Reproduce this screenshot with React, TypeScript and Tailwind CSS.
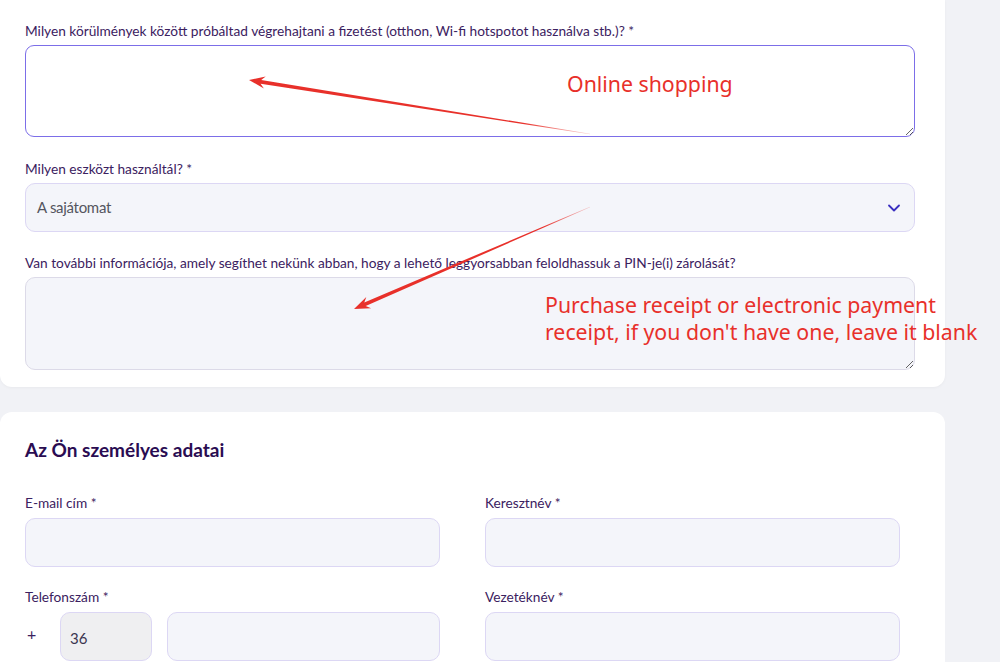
import { ChevronDown } from 'lucide-react'

const label = 'block text-[13.7px] leading-[18px] text-[#3b2160] mb-[5px]'
const field = 'block w-full h-[49px] rounded-[10px] border border-[#dcd7f4] bg-[#f4f5fa]'

export default function App() {
  return (
    <div className="relative min-h-[662px] w-[1000px] overflow-hidden bg-[#f1f2f6] font-['Lato',sans-serif]">
      <div className="w-[945px] rounded-b-[12px] bg-white pl-[25px] pr-[30px] pt-[22px] pb-[17px] shadow-[0_1px_3px_rgba(0,0,0,0.04)]">
        <label className={label}>
          Milyen körülmények között próbáltad végrehajtani a fizetést (otthon, Wi-fi hotspotot használva stb.)? *
        </label>
        <textarea className="block h-[92px] w-full rounded-[9px] border-[1.5px] border-[#7c6ee8] bg-white outline-none" />

        <label className={label + ' mt-[23px]'}>Milyen eszközt használtál? *</label>
        <div className={field + ' flex items-center justify-between pl-[11px] pr-[10px]'}>
          <span className="text-[15px] tracking-[-0.3px] text-[#555560]">A sajátomat</span>
          <ChevronDown size={20} strokeWidth={2.2} className="text-[#3a2fc0]" />
        </div>

        <label className={label + ' mt-[22px]'}>
          Van további információja, amely segíthet nekünk abban, hogy a lehető leggyorsabban feloldhassuk a PIN-je(i) zárolását?
        </label>
        <textarea className="block h-[93px] w-full rounded-[10px] border border-[#dcdae8] bg-[#f4f5fa] outline-none" />
      </div>

      <div className="mt-[25px] w-[945px] rounded-t-[12px] bg-white pl-[25px] pr-[45px] pt-[26px] pb-[10px]">
        <h2 className="text-[19px] font-bold leading-[24px] text-[#2a0c52]">Az Ön személyes adatai</h2>
        <div className="mt-[32px] grid grid-cols-2 gap-x-[45px] gap-y-[21px]">
          <div>
            <label className={label + ' mb-[6px]'}>E-mail cím *</label>
            <div className={field} />
          </div>
          <div>
            <label className={label + ' mb-[6px]'}>Keresztnév *</label>
            <div className={field} />
          </div>
          <div>
            <label className={label + ' mb-[6px]'}>Telefonszám *</label>
            <div className="flex items-start">
              <span className="w-[35px] pl-[2px] pt-[10px] text-[16px] text-[#3b2160]">+</span>
              <div className="flex h-[49px] w-[92px] items-center rounded-[10px] border border-[#dcd7f4] bg-[#efeff1] pl-[9px] pt-[4px] text-[15px] text-[#3a3550]">
                36
              </div>
              <div className={field + ' ml-[15px] flex-1'} />
            </div>
          </div>
          <div>
            <label className={label + ' mb-[6px]'}>Vezetéknév *</label>
            <div className={field} />
          </div>
        </div>
      </div>

      {/* red annotations drawn over the form */}
      <svg className="pointer-events-none absolute left-0 top-0" width="1000" height="662">
        <defs>
          <linearGradient id="fade1" x1="249" y1="80" x2="590" y2="134" gradientUnits="userSpaceOnUse">
            <stop offset="0" stopColor="#e8302a" />
            <stop offset="0.8" stopColor="#e8302a" />
            <stop offset="1" stopColor="#e8302a" stopOpacity="0.2" />
          </linearGradient>
          <linearGradient id="fade2" x1="354" y1="309" x2="590" y2="207" gradientUnits="userSpaceOnUse">
            <stop offset="0" stopColor="#e8302a" />
            <stop offset="0.8" stopColor="#e8302a" />
            <stop offset="1" stopColor="#e8302a" stopOpacity="0.2" />
          </linearGradient>
        </defs>
        <polygon
          points="249,80 265.7,76.6 261.2,80.1 590,133.7 590,134.3 260.6,83.7 263.9,88.4"
          fill="url(#fade1)"
        />
        <polygon
          points="354,309 366.3,297.1 364.3,302.5 589.9,206.7 590.1,207.3 365.7,305.9 371.1,308.2"
          fill="url(#fade2)"
        />
      </svg>
      <div className="pointer-events-none absolute left-[567px] top-[70px] font-['Noto_Sans',sans-serif] text-[21.3px] leading-[28px] text-[#e8302a]">
        Online shopping
      </div>
      <div className="pointer-events-none absolute left-[545px] top-[291px] font-['Noto_Sans',sans-serif] text-[21.3px] leading-[27px] text-[#e8302a] whitespace-nowrap">
        Purchase receipt or electronic payment
        <br />
        receipt, if you don't have one, leave it blank
      </div>
    </div>
  )
}
